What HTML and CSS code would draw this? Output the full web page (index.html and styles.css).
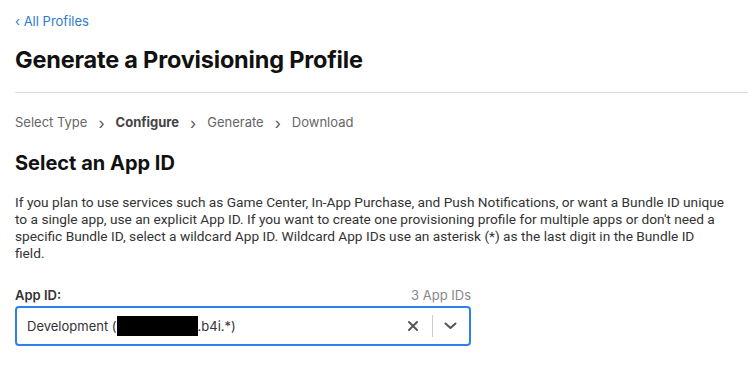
FILE: index.html
```html
<!DOCTYPE html>
<html lang="en">
<head>
    <meta charset="UTF-8">
    <title>Generate a Provisioning Profile</title>
    <link rel="stylesheet" href="styles.css">
</head>
<body>

    <div class="page">
        <a class="back-link" href="#">&lsaquo; All Profiles</a>

        <h1 class="page-title">Generate a Provisioning Profile</h1>
    </div>

    <div class="divider"></div>

    <div class="page">
        <!-- Steps -->
        <div class="steps">
            <span class="step">Select Type</span>
            <span class="step-arrow">&rsaquo;</span>
            <span class="step current">Configure</span>
            <span class="step-arrow">&rsaquo;</span>
            <span class="step">Generate</span>
            <span class="step-arrow">&rsaquo;</span>
            <span class="step">Download</span>
        </div>

        <h2 class="section-title">Select an App ID</h2>

        <p class="intro">If you plan to use services such as Game Center, In-App Purchase, and Push Notifications, or want a Bundle ID unique to a single app, use an explicit App ID. If you want to create one provisioning profile for multiple apps or don't need a specific Bundle ID, select a wildcard App ID. Wildcard App IDs use an asterisk (*) as the last digit in the Bundle ID field.</p>

        <div class="field">
            <div class="field-head">
                <label class="field-label">App ID:</label>
                <span class="field-count">3 App IDs</span>
            </div>
            <div class="select-box">
                <div class="select-value">Development (<span class="redacted"></span>.b4i.*)</div>
                <div class="select-actions">
                    <svg class="clear-icon" width="12" height="12" viewBox="0 0 12 12">
                        <path d="M2 2 L10 10 M10 2 L2 10" stroke="#555" stroke-width="2" stroke-linecap="round"/>
                    </svg>
                    <span class="select-sep"></span>
                    <svg class="chevron-icon" width="13" height="8" viewBox="0 0 13 8">
                        <path d="M1.5 1.5 L6.5 6 L11.5 1.5" stroke="#555" stroke-width="2" fill="none" stroke-linecap="round" stroke-linejoin="round"/>
                    </svg>
                </div>
            </div>
        </div>
    </div>

</body>
</html>
```

FILE: styles.css
```css
body {
    margin: 0;
    font-family: Inter, "Noto Sans", sans-serif;
    background-color: #fff;
    color: #1d1d1f;
}

.page {
    padding: 0 15px;
}

.back-link {
    display: block;
    padding-top: 12px;
    font-size: 13px;
    line-height: 18px;
    color: #2f7bd0;
    text-decoration: none;
}

.page-title {
    margin: 0;
    padding-top: 15px;
    padding-bottom: 17px;
    font-size: 23.5px;
    line-height: 30px;
    font-weight: 700;
    color: #111;
    letter-spacing: -0.2px;
}

.divider {
    margin-left: 15px;
    height: 1px;
    background-color: #dcdcdc;
}

.steps {
    display: flex;
    align-items: center;
    padding-top: 19px;
    font-size: 13px;
    line-height: 18px;
    color: #666;
}

.step.current {
    font-weight: 700;
    color: #444;
}

.step-arrow {
    margin: 2px 11px 0 11px;
    font-size: 16px;
    color: #555;
}

.section-title {
    margin: 0;
    padding-top: 18px;
    font-size: 20px;
    line-height: 26px;
    font-weight: 700;
    color: #111;
}

.intro {
    margin: 0 7px 0 0;
    padding-top: 18px;
    font-family: Roboto, sans-serif;
    font-size: 13.7px;
    line-height: 17px;
    color: #333;
}

.field {
    width: 456px;
    padding-top: 25px;
}

.field-head {
    display: flex;
    justify-content: space-between;
    align-items: flex-end;
    margin-bottom: 3px;
}

.field-label {
    font-size: 13px;
    font-weight: 600;
    color: #333;
}

.field-count {
    font-size: 13px;
    color: #888;
}

.select-box {
    display: flex;
    align-items: center;
    height: 36px;
    border: 2px solid #2f80ed;
    border-radius: 4px;
}

.select-value {
    flex: 1;
    display: flex;
    align-items: center;
    padding-left: 10px;
    font-size: 13px;
    color: #333;
}

.redacted {
    display: inline-block;
    width: 81px;
    height: 20px;
    background-color: #000;
}

.select-actions {
    display: flex;
    align-items: center;
    padding-right: 12px;
}

.select-sep {
    width: 1px;
    height: 22px;
    margin: 0 11px 0 13px;
    background-color: #ccc;
}
```
